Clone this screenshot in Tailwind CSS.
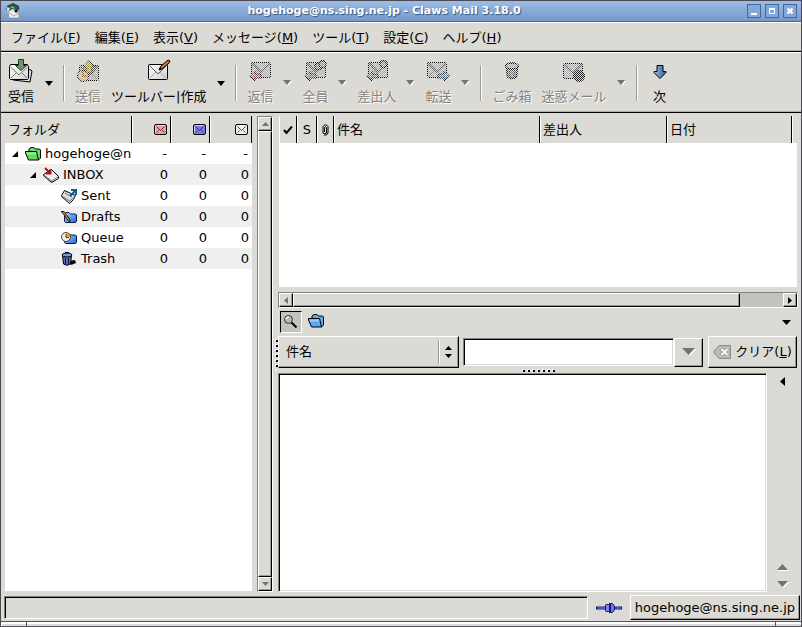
<!DOCTYPE html>
<html lang="ja">
<head>
    <meta charset="UTF-8">
    <meta name="viewport" content="width=device-width, initial-scale=1.0">
    <title>hogehoge@ns.sing.ne.jp - Claws Mail 3.18.0</title>
    <script src="https://cdn.jsdelivr.net/npm/@tailwindcss/browser@4"></script>
</head>
<body class="h-screen overflow-hidden flex flex-col bg-[#dcdad5] text-black text-[13px] leading-5 font-['DejaVu_Sans','Noto_Sans_CJK_JP',sans-serif] border-x border-t border-[#4a4a50] cursor-default">

    <!-- Shared icons -->
    <svg class="absolute w-0 h-0" aria-hidden="true">
        <defs>
            <pattern id="stipple" width="2" height="2" patternUnits="userSpaceOnUse">
                <path d="M0 0h1v1h-1zM1 1h1v1h-1z" fill="#dcdad5" shape-rendering="crispEdges"/>
            </pattern>
            <linearGradient id="blue" x1="0" y1="0" x2="1" y2="1">
                <stop offset="0" stop-color="#b4dcff"/><stop offset="1" stop-color="#1c62d8"/>
            </linearGradient>
            <linearGradient id="steel"><stop offset="0" stop-color="#9cc4ea"/><stop offset="1" stop-color="#2c5688"/></linearGradient>
            <linearGradient id="paper" x1="0" y1="0" x2="1" y2="1">
                <stop offset="0" stop-color="#fff"/><stop offset="1" stop-color="#d0d0d0"/>
            </linearGradient>
        </defs>
        <symbol id="envelope" viewBox="0 0 20 16">
            <rect x=".5" y=".5" width="19" height="15" rx="1" fill="url(#paper)" stroke="#000"/>
            <path d="M2 14l6-6M18 14l-6-6" stroke="#aaa" fill="none"/>
            <path d="M1.500 1.500L10 10l8.500-8.500" fill="none" stroke="#555"/>
        </symbol>
        <symbol id="dim-envelope" viewBox="0 0 20 16">
            <rect x=".5" y=".5" width="19" height="15" rx="1" fill="#b0b0b0" stroke="#000"/>
            <path d="M2 14l6-6M18 14l-6-6" stroke="#888" fill="none"/>
            <path d="M1.500 1.500L10 10l8.500-8.500" fill="none" stroke="#555" stroke-width="2"/>
        </symbol>
        <symbol id="mini-envelope" viewBox="0 0 13 11">
            <rect x=".5" y=".5" width="12" height="10" rx="1.500" fill="currentColor" stroke="#000"/>
            <path d="M2.500 2.500l4 4 4-4M2.500 8.500l2-2M10.500 8.500l-2-2" fill="none" stroke="#222" stroke-width=".8"/>
            <path d="M2 1.500h9M1.500 2v7" stroke="#fff" opacity=".6"/>
        </symbol>
        <symbol id="person" viewBox="0 0 10 10">
            <circle cx="5" cy="4.500" r="4" fill="#b88868" stroke="#000" stroke-width="1.500"/>
            <path d="M2 4q1-3 3-2.500t3 2" stroke="#6b3a12" fill="none"/>
        </symbol>
        <symbol id="reply-arrow" viewBox="0 0 13 12">
            <path d="M.8 6L6 1v3h6v4H6v3z" fill="#a86a6a" stroke="#000"/>
        </symbol>
        <symbol id="folder" viewBox="0 0 16 14">
            <path d="M4 4V2l2-1.500h3l1.500 1.500h4l1 1v8l-2 2z" fill="currentColor" stroke="#000"/>
            <path d="M.5 4.500h11l2 8.500h-10L.5 6z" fill="currentColor" stroke="#000"/>
            <path d="M1.500 5.500h9.500l.5 2H2z" fill="#fff" opacity=".4"/>
        </symbol>
        <symbol id="closed-folder" viewBox="0 0 13 11">
            <path d="M.5 9.500V2L2 .5h3L6.500 2h5l1 1v6.500l-1 1h-10z" fill="url(#blue)" stroke="#00184a"/>
        </symbol>
    </svg>

    <header class="h-[21px] shrink-0 flex items-center border-b border-[#46689a] bg-linear-to-b from-[#9dbce8] to-[#7599c9] px-1">
        <svg class="w-4 h-4" viewBox="0 0 16 16" aria-hidden="true">
            <path d="M1 6q1-4 4-4 3-3 6 0 3 0 3 4l-2 1-3-2-5 4z" fill="#2e5a3c" stroke="#14281e" stroke-width=".7"/>
            <path d="M1 4l4 1-2 5z" fill="#cbdde8"/>
            <path d="M6 4l3 1M8 7l2 1" stroke="#7ed03c" stroke-width="1.500"/>
            <path d="M3 9l4-3 7 4v5H4z" fill="#eee" stroke="#888" stroke-width=".7"/>
            <path d="M4 10l5 3 5-3" fill="none" stroke="#aaa"/>
            <circle cx="11" cy="8" r="1.500" fill="#111"/>
        </svg>
        <h1 class="flex-1 text-center text-[11px] font-bold text-white [text-shadow:1px_1px_1px_#34557f]">hogehoge@ns.sing.ne.jp - Claws Mail 3.18.0</h1>
        <div class="flex gap-1">
            <button aria-label="最小化" class="w-[14px] h-[14px] border border-[#41699d] bg-[#83a7d8] flex items-center justify-center">
                <svg class="w-3 h-3 shrink-0" viewBox="0 0 12 12"><path d="M3 8h6v2H3z" fill="#fff"/></svg>
            </button>
            <button aria-label="最大化" class="w-[14px] h-[14px] border border-[#41699d] bg-[#83a7d8] flex items-center justify-center">
                <svg class="w-3 h-3 shrink-0" viewBox="0 0 12 12"><path d="M3 3h6v6H3zM4 5v3h4V5z" fill="#fff" fill-rule="evenodd"/></svg>
            </button>
            <button aria-label="閉じる" class="w-[14px] h-[14px] border border-[#41699d] bg-[#83a7d8] flex items-center justify-center">
                <svg class="w-3 h-3 shrink-0" viewBox="0 0 12 12"><path d="M3.500 3.500l5 5m0-5l-5 5" stroke="#fff" stroke-width="2.400"/></svg>
            </button>
        </div>
    </header>

    <nav class="h-[30px] shrink-0 flex items-center pt-px pl-[3px] border-t border-t-white border-b border-b-black shadow-[inset_0_-1px_0_#aeaca6]">
        <button class="px-[7px]">ファイル(<u>F</u>)</button>
        <button class="px-[7px]">編集(<u>E</u>)</button>
        <button class="px-[7px]">表示(<u>V</u>)</button>
        <button class="px-[7px]">メッセージ(<u>M</u>)</button>
        <button class="px-[7px]">ツール(<u>T</u>)</button>
        <button class="px-[7px]">設定(<u>C</u>)</button>
        <button class="px-[7px]">ヘルプ(<u>H</u>)</button>
    </nav>

    <div role="toolbar" class="h-[61px] shrink-0 flex items-center pt-px pl-[2px] border-t border-t-white border-b border-b-black shadow-[inset_0_-1px_0_#aeaca6] whitespace-nowrap">
        <button class="px-[5px] flex flex-col items-center gap-1">
            <svg class="w-6 h-6" viewBox="0 0 24 24">
                <path d="M5 9l17 2 1 1-2 11-17-2z" fill="#ddd" stroke="#000"/>
                <path d="M.5 7.500l1-2h17l1 2v12l-1 1h-17l-1-1z" fill="url(#paper)" stroke="#000"/>
                <path d="M1.500 8l8.500 8 8.500-8M2 19l5-5m11 5l-5-5" fill="none" stroke="#777"/>
                <path d="M9.500.5h5v6h3L12 11.500 6.500 6.500h3z" fill="#6a9a6c" stroke="#1b3a1d"/>
            </svg>
            <span>受信</span>
        </button>
        <button aria-label="受信メニュー" class="w-[19px] flex justify-center"><svg class="w-2 h-[5px]" viewBox="0 0 8 5"><path d="M0 0h8L4 5z"/></svg></button>
        <div class="w-3 h-9 flex justify-center"><div class="w-[2px] bg-[#9c9a94] border-r border-white"></div></div>
        <button disabled class="px-[5px] flex flex-col items-center gap-1 text-[#858380] [text-shadow:1px_1px_0_#fff]">
            <svg class="w-6 h-6" viewBox="0 0 24 24">
                <use href="#dim-envelope" x="3" y="6" width="20" height="16"/>
                <path d="M7 8l6-6.500L19 8h-3v6h-6V8z" fill="#a09850" stroke="#000"/>
                <circle cx="7" cy="17" r="5.500" fill="#c0b8a0" stroke="#000"/><path d="M7 12v5h4" stroke="#945a18" fill="none" stroke-width="2"/>
                <path d="M0 0h24v24H0z" fill="url(#stipple)"/>
            </svg>
            <span>送信</span>
        </button>
        <button class="px-[5px] flex flex-col items-center gap-1">
            <svg class="w-6 h-6" viewBox="0 0 24 24">
                <use href="#envelope" x="1" y="5" width="20" height="16"/>
                <path d="M12 11l2-4 7-6 2 1-1 2-7 6z" fill="#c8783c" stroke="#000"/><path d="M12 11l1-3 1.500 2z"/>
            </svg>
            <span>ツールバー|作成</span>
        </button>
        <button aria-label="作成メニュー" class="w-[19px] flex justify-center"><svg class="w-2 h-[5px]" viewBox="0 0 8 5"><path d="M0 0h8L4 5z"/></svg></button>
        <div class="w-3 h-9 flex justify-center"><div class="w-[2px] bg-[#9c9a94] border-r border-white"></div></div>
        <button disabled class="px-[5px] flex flex-col items-center gap-1 text-[#858380] [text-shadow:1px_1px_0_#fff]">
            <svg class="w-6 h-6" viewBox="0 0 24 24">
                <use href="#dim-envelope" x="3" y="3" width="20" height="16"/>
                <use href="#reply-arrow" x="1" y="11" width="13" height="12"/>
                <path d="M0 0h24v24H0z" fill="url(#stipple)"/>
            </svg>
            <span>返信</span>
        </button>
        <button disabled aria-label="返信メニュー" class="w-[19px] flex justify-center"><svg class="w-[9px] h-[6px]" viewBox="0 0 9 6"><path d="M1 1h8L5 6z" fill="#fff"/><path d="M0 0h8L4 5z" fill="#757370"/></svg></button>
        <button disabled class="px-[5px] flex flex-col items-center gap-1 text-[#858380] [text-shadow:1px_1px_0_#fff]">
            <svg class="w-6 h-6" viewBox="0 0 24 24">
                <use href="#dim-envelope" x="3" y="3" width="20" height="16"/>
                <use href="#person" x="11" y="3" width="9" height="9"/><use href="#person" x="15" y="1" width="9" height="9"/>
                <use href="#reply-arrow" x="1" y="11" width="13" height="12"/>
                <path d="M0 0h24v24H0z" fill="url(#stipple)"/>
            </svg>
            <span>全員</span>
        </button>
        <button disabled aria-label="全員メニュー" class="w-[19px] flex justify-center"><svg class="w-[9px] h-[6px]" viewBox="0 0 9 6"><path d="M1 1h8L5 6z" fill="#fff"/><path d="M0 0h8L4 5z" fill="#757370"/></svg></button>
        <button disabled class="px-[5px] flex flex-col items-center gap-1 text-[#858380] [text-shadow:1px_1px_0_#fff]">
            <svg class="w-6 h-6" viewBox="0 0 24 24">
                <use href="#dim-envelope" x="3" y="3" width="20" height="16"/>
                <use href="#person" x="14" y="1" width="9" height="9"/>
                <use href="#reply-arrow" x="1" y="11" width="13" height="12"/>
                <path d="M0 0h24v24H0z" fill="url(#stipple)"/>
            </svg>
            <span>差出人</span>
        </button>
        <button disabled aria-label="差出人メニュー" class="w-[19px] flex justify-center"><svg class="w-[9px] h-[6px]" viewBox="0 0 9 6"><path d="M1 1h8L5 6z" fill="#fff"/><path d="M0 0h8L4 5z" fill="#757370"/></svg></button>
        <button disabled class="px-[5px] flex flex-col items-center gap-1 text-[#858380] [text-shadow:1px_1px_0_#fff]">
            <svg class="w-6 h-6" viewBox="0 0 24 24">
                <use href="#dim-envelope" x="1" y="3" width="20" height="16"/>
                <path d="M23.500 17L18 12v3h-6v4h6v3z" fill="#6080a8" stroke="#000"/>
                <path d="M0 0h24v24H0z" fill="url(#stipple)"/>
            </svg>
            <span>転送</span>
        </button>
        <button disabled aria-label="転送メニュー" class="w-[19px] flex justify-center"><svg class="w-[9px] h-[6px]" viewBox="0 0 9 6"><path d="M1 1h8L5 6z" fill="#fff"/><path d="M0 0h8L4 5z" fill="#757370"/></svg></button>
        <div class="w-3 h-9 flex justify-center"><div class="w-[2px] bg-[#9c9a94] border-r border-white"></div></div>
        <button disabled class="px-[5px] flex flex-col items-center gap-1 text-[#858380] [text-shadow:1px_1px_0_#fff]">
            <svg class="w-6 h-6" viewBox="0 0 24 24">
                <path d="M6.500 8l1 10q4.500 3 9 0l1-10z" fill="#888" stroke="#000" stroke-width="1.500"/>
                <path d="M10 10v9M14 10v9" stroke="#222"/>
                <ellipse cx="12" cy="7" rx="6.500" ry="3" fill="#aaa" stroke="#000" stroke-width="1.500"/><path d="M10 4h4" stroke="#000"/>
                <path d="M0 0h24v24H0z" fill="url(#stipple)"/>
            </svg>
            <span>ごみ箱</span>
        </button>
        <button disabled class="px-[5px] flex flex-col items-center gap-1 text-[#858380] [text-shadow:1px_1px_0_#fff]">
            <svg class="w-6 h-6" viewBox="0 0 24 24">
                <use href="#dim-envelope" x="1" y="4" width="20" height="16"/>
                <circle cx="17" cy="17" r="5.500" fill="#222" stroke="#000"/>
                <path d="M0 0h24v24H0z" fill="url(#stipple)"/>
            </svg>
            <span>迷惑メール</span>
        </button>
        <button disabled aria-label="迷惑メールメニュー" class="w-[19px] flex justify-center"><svg class="w-[9px] h-[6px]" viewBox="0 0 9 6"><path d="M1 1h8L5 6z" fill="#fff"/><path d="M0 0h8L4 5z" fill="#757370"/></svg></button>
        <div class="w-3 h-9 flex justify-center"><div class="w-[2px] bg-[#9c9a94] border-r border-white"></div></div>
        <button class="px-[5px] flex flex-col items-center gap-1">
            <svg class="w-6 h-6" viewBox="0 0 24 24"><path d="M9 6.500h6v6h3v1l-6 6-6-6v-1h3z" fill="url(#steel)" stroke="#000"/></svg>
            <span>次</span>
        </button>
    </div>

    <main class="flex-1 min-h-0 flex pt-[3px] pb-[3px] pl-1 pr-[3px]">
        <!-- Folder tree -->
        <section class="w-[247px] shrink-0 bg-white mb-px overflow-hidden">
            <table class="w-full table-fixed border-separate border-spacing-0">
                <thead>
                    <tr class="h-[27px] bg-[#dcdad5]">
                        <th class="w-[127px] p-0 pl-[3px] text-left font-normal border-r border-black">フォルダ</th>
                        <th class="w-[39px] p-0 pr-[3px] border-l border-l-white border-r border-r-black"><svg class="w-[13px] h-[11px] ml-auto text-[#f49a9a]" role="img" aria-label="新着"><use href="#mini-envelope"/></svg></th>
                        <th class="w-[39px] p-0 pr-[3px] border-l border-l-white border-r border-r-black"><svg class="w-[13px] h-[11px] ml-auto text-[#7a7ae0]" role="img" aria-label="未読"><use href="#mini-envelope"/></svg></th>
                        <th class="p-0 pr-[3px] border-l border-l-white border-r border-r-black"><svg class="w-[13px] h-[11px] ml-auto text-[#eee]" role="img" aria-label="合計"><use href="#mini-envelope"/></svg></th>
                    </tr>
                </thead>
                <tbody class="text-right">
                    <tr class="h-[21px]">
                        <td class="p-0 pl-[7px] overflow-hidden">
                            <div class="flex items-center gap-1 whitespace-nowrap">
                                <svg class="w-[6px] h-[6px] mr-[3px] shrink-0" viewBox="0 0 6 6"><path d="M6 0v6H0z"/></svg>
                                <svg class="w-4 h-[14px] shrink-0 text-[#62dc62]"><use href="#folder"/></svg>
                                <span class="flex-1 min-w-0 overflow-hidden text-left">hogehoge@ns.sing.ne.jp</span>
                            </div>
                        </td>
                        <td class="p-0 pr-1">-</td><td class="p-0 pr-1">-</td><td class="p-0 pr-1">-</td>
                    </tr>
                    <tr class="h-[21px] bg-[#efefef]">
                        <td class="p-0 pl-[25px]">
                            <div class="flex items-center gap-1">
                                <svg class="w-[6px] h-[6px] mr-[3px] shrink-0" viewBox="0 0 6 6"><path d="M6 0v6H0z"/></svg>
                                <svg class="w-4 h-4 shrink-0" viewBox="0 0 16 16">
                                    <path d="M.5 7.500l8-5 7 7v2l-7 4-8-7z" fill="#eee" stroke="#000"/>
                                    <path d="M1 8l7.500 6 7-4.500M8.500 14v1" fill="none" stroke="#777"/>
                                    <path d="M2 1l5 5M7.500 2v4.500H3" stroke="#b01018" stroke-width="2" fill="none"/>
                                </svg>
                                <span>INBOX</span>
                            </div>
                        </td>
                        <td class="p-0 pr-[3px]">0</td><td class="p-0 pr-[3px]">0</td><td class="p-0 pr-[3px]">0</td>
                    </tr>
                    <tr class="h-[21px]">
                        <td class="p-0 pl-14">
                            <div class="flex items-center gap-1">
                                <svg class="w-4 h-4 shrink-0" viewBox="0 0 16 16">
                                    <path d="M.5 7.500l3-5 11 5-2 4-4 4-8-7z" fill="#ddd" stroke="#000"/>
                                    <path d="M4 5l7 4M1 8l7.500 5 4-3" fill="none" stroke="#777"/>
                                    <path d="M9 8l5-5M10 2h5v5" stroke="#08608c" stroke-width="2" fill="none"/>
                                </svg>
                                <span>Sent</span>
                            </div>
                        </td>
                        <td class="p-0 pr-[3px]">0</td><td class="p-0 pr-[3px]">0</td><td class="p-0 pr-[3px]">0</td>
                    </tr>
                    <tr class="h-[21px] bg-[#efefef]">
                        <td class="p-0 pl-14">
                            <div class="flex items-center gap-1">
                                <svg class="w-4 h-4 shrink-0" viewBox="0 0 16 16">
                                    <use href="#closed-folder" x="3" y="3" width="13" height="11"/>
                                    <path d="M0 2.500h3l6 8v2l-2-1-5-7z" fill="#b98048" stroke="#000" stroke-width=".8"/>
                                </svg>
                                <span>Drafts</span>
                            </div>
                        </td>
                        <td class="p-0 pr-[3px]">0</td><td class="p-0 pr-[3px]">0</td><td class="p-0 pr-[3px]">0</td>
                    </tr>
                    <tr class="h-[21px]">
                        <td class="p-0 pl-14">
                            <div class="flex items-center gap-1">
                                <svg class="w-4 h-4 shrink-0" viewBox="0 0 16 16">
                                    <use href="#closed-folder" x="3" y="3" width="13" height="11"/>
                                    <circle cx="5" cy="7" r="4.500" fill="#eee" stroke="#444"/>
                                    <path d="M5 3v4h4a4 4 0 0 0-4-4" fill="#e8a020"/><path d="M5 4v3.500h3" stroke="#704000" fill="none"/>
                                </svg>
                                <span>Queue</span>
                            </div>
                        </td>
                        <td class="p-0 pr-[3px]">0</td><td class="p-0 pr-[3px]">0</td><td class="p-0 pr-[3px]">0</td>
                    </tr>
                    <tr class="h-[21px] bg-[#efefef]">
                        <td class="p-0 pl-14">
                            <div class="flex items-center gap-1">
                                <svg class="w-4 h-4 shrink-0" viewBox="0 0 16 16">
                                    <path d="M8 10l6-1 1 3-5 2z"/>
                                    <path d="M1.500 4l1 9q3.500 2.500 7 0l1-9z" fill="#5a6cb0" stroke="#000"/>
                                    <path d="M4.500 7v6M7.500 7v6" stroke="#10183c"/>
                                    <ellipse cx="6" cy="4" rx="5" ry="2" fill="#8494cc" stroke="#000"/><path d="M4 1.500h4" stroke="#000"/>
                                </svg>
                                <span>Trash</span>
                            </div>
                        </td>
                        <td class="p-0 pr-[3px]">0</td><td class="p-0 pr-[3px]">0</td><td class="p-0 pr-[3px]">0</td>
                    </tr>
                </tbody>
            </table>
        </section>

        <!-- Tree scrollbar -->
        <div class="w-4 shrink-0 ml-[5px] flex flex-col border border-l-[#84827c] border-t-[#84827c] border-r-white border-b-white bg-[#c4c2bd]">
            <button disabled aria-label="上へ" class="h-[14px] shrink-0 flex items-center justify-center bg-[#dcdad5] border border-t-white border-l-white border-r-black border-b-black shadow-[inset_-1px_-1px_0_#9c9a94]">
                <svg class="w-[7px] h-1" viewBox="0 0 7 4"><path d="M0 4h7L3.500 0z" fill="#757370"/></svg>
            </button>
            <div class="flex-1 bg-[#dcdad5] border border-t-white border-l-white border-r-black border-b-black shadow-[inset_-1px_-1px_0_#9c9a94]"></div>
            <button disabled aria-label="下へ" class="h-[14px] shrink-0 flex items-center justify-center bg-[#dcdad5] border border-t-white border-l-white border-r-black border-b-black shadow-[inset_-1px_-1px_0_#9c9a94]">
                <svg class="w-[7px] h-1" viewBox="0 0 7 4"><path d="M0 0h7L3.500 4z" fill="#757370"/></svg>
            </button>
        </div>

        <!-- Vertical pane grip -->
        <div class="w-[5px] shrink-0 flex items-center justify-end">
            <svg class="w-[3px] h-[31px]" viewBox="0 0 3 31" shape-rendering="crispEdges">
                <path d="M1 0v31" stroke="#fff" stroke-width="2" stroke-dasharray="2 3"/>
                <path d="M2 1v30" stroke="#000" stroke-width="2" stroke-dasharray="2 3"/>
            </svg>
        </div>

        <section class="flex-1 min-w-0 flex flex-col">
            <!-- Message list -->
            <div class="h-[171px] shrink-0 mx-px bg-white">
                <table class="w-full table-fixed border-separate border-spacing-0">
                    <thead>
                        <tr class="h-[27px] bg-[#dcdad5] text-left">
                            <th class="w-[18px] p-0 border-l border-l-white border-r border-r-black">
                                <svg class="w-[10px] h-[10px] mx-auto" viewBox="0 0 10 10" role="img" aria-label="マーク"><path d="M1 5l2.500 3L9 1.500" fill="none" stroke="#000" stroke-width="2"/></svg>
                            </th>
                            <th class="w-5 p-0 text-center font-normal border-l border-l-white border-r border-r-black">S</th>
                            <th class="w-[17px] p-0 border-l border-l-white border-r border-r-black">
                                <svg class="w-[7px] h-3 mx-auto" viewBox="0 0 7 12" role="img" aria-label="添付"><path d="M2.500 8V3.500q1-1.500 2 0V9q-1.500 1.500-3.500 0V2.500q2.500-3.500 5 0V9q-1 3-4 2" fill="none" stroke="#000"/></svg>
                            </th>
                            <th class="p-0 pl-[2px] font-normal border-l border-l-white border-r border-r-black">件名</th>
                            <th class="w-[127px] p-0 pl-[2px] font-normal border-l border-l-white border-r border-r-black">差出人</th>
                            <th class="w-[125px] p-0 pl-[2px] font-normal border-l border-l-white border-r border-r-black">日付</th>
                            <th class="w-[5px] p-0 border-l border-l-white"></th>
                        </tr>
                    </thead>
                </table>
            </div>

            <!-- List scrollbar -->
            <div class="h-4 shrink-0 mt-[5px] flex border border-l-[#84827c] border-t-[#84827c] border-r-white border-b-white bg-[#c4c2bd]">
                <button disabled aria-label="左へ" class="w-[14px] shrink-0 flex items-center justify-center bg-[#dcdad5] border border-t-white border-l-white border-r-black border-b-black shadow-[inset_-1px_-1px_0_#9c9a94]">
                    <svg class="w-1 h-[7px]" viewBox="0 0 4 7"><path d="M4 0v7L0 3.500z" fill="#757370"/></svg>
                </button>
                <div class="flex-1 pr-[43px] flex">
                    <div class="flex-1 bg-[#dcdad5] border border-t-white border-l-white border-r-black border-b-black shadow-[inset_-1px_-1px_0_#9c9a94]"></div>
                </div>
                <button aria-label="右へ" class="w-[14px] shrink-0 flex items-center justify-center bg-[#dcdad5] border border-t-white border-l-white border-r-black border-b-black shadow-[inset_-1px_-1px_0_#9c9a94]">
                    <svg class="w-1 h-[7px]" viewBox="0 0 4 7"><path d="M0 0v7l4-3.500z"/></svg>
                </button>
            </div>

            <div class="h-[22px] shrink-0 mt-[3px] ml-[2px] pr-[7px] flex items-center">
                <button aria-label="検索" class="w-[22px] h-[22px] flex items-center justify-center bg-[#c4c2bd] border border-t-black border-l-black border-r-white border-b-white">
                    <svg class="w-4 h-4" viewBox="0 0 16 16">
                        <path d="M8 8l5.500 5.500" stroke="#000" stroke-width="2"/>
                        <circle cx="5.500" cy="5.500" r="4" fill="#b8b8a4" stroke="#333"/><path d="M3 5q1-2 3-2" stroke="#fff" fill="none" stroke-width="1.500"/>
                    </svg>
                </button>
                <button aria-label="フォルダ" class="ml-[6px] mb-[3px]"><svg class="w-4 h-[14px] text-[#5aa8f4]"><use href="#folder"/></svg></button>
                <button aria-label="スレッド" class="ml-auto"><svg class="w-[9px] h-[5px]" viewBox="0 0 9 5"><path d="M0 0h9L4.500 5z"/></svg></button>
            </div>

            <!-- Quick search -->
            <div class="h-8 shrink-0 mt-[3px] pr-px flex items-center">
                <div class="w-[181px] h-8 shrink-0 relative border border-t-white border-l-white border-r-black border-b-black shadow-[inset_-1px_-1px_0_#9c9a94]">
                    <select aria-label="検索対象" class="appearance-none w-full h-full pl-[7px] bg-transparent outline-none">
                        <option>件名</option>
                    </select>
                    <div class="absolute right-[6px] inset-y-[2px] flex items-center gap-[5px] pointer-events-none">
                        <div class="w-[2px] h-6 bg-[#9c9a94] border-r border-white"></div>
                        <svg class="w-[7px] h-3" viewBox="0 0 7 12"><path d="M0 4h7L3.500 0zM0 8h7l-3.500 4z"/></svg>
                    </div>
                </div>
                <input type="text" aria-label="検索語" class="flex-1 min-w-0 h-7 ml-1 px-1 bg-white outline-none border border-t-[#84827c] border-l-[#84827c] border-r-white border-b-white shadow-[inset_1px_1px_0_#000,inset_-1px_-1px_0_#dcdad5]">
                <button disabled aria-label="履歴" class="w-[29px] h-[29px] shrink-0 flex items-center justify-center border border-t-white border-l-white border-r-black border-b-black shadow-[inset_-1px_-1px_0_#9c9a94]">
                    <svg class="w-[14px] h-2" viewBox="0 0 14 8"><path d="M1 1h13L8 8z" fill="#fff"/><path d="M0 0h13L6.500 7z" fill="#757370"/></svg>
                </button>
                <button class="w-[89px] h-8 shrink-0 ml-[5px] flex items-center justify-center gap-1 whitespace-nowrap border border-t-white border-l-white border-r-black border-b-black shadow-[inset_-1px_-1px_0_#9c9a94]">
                    <svg class="w-[18px] h-4" viewBox="0 0 18 16"><path d="M.5 8L6 1.500h11.500v13H6z" fill="#bcbab5" stroke="#8c8a86"/><path d="M8.500 5l6 6m0-6l-6 6" stroke="#777" stroke-width="3"/><path d="M8.500 5l6 6m0-6l-6 6" stroke="#fff" stroke-width="2"/></svg>
                    <span>クリア(<u>L</u>)</span>
                </button>
            </div>

            <div class="h-[5px] shrink-0 flex items-center justify-center">
                <svg class="w-[33px] h-[3px]" viewBox="0 0 33 3" shape-rendering="crispEdges">
                    <path d="M0 1h33" stroke="#fff" stroke-width="2" stroke-dasharray="2 3"/>
                    <path d="M1 2h32" stroke="#000" stroke-width="2" stroke-dasharray="2 3"/>
                </svg>
            </div>

            <!-- Message view -->
            <div class="flex-1 min-h-0 flex">
                <article class="flex-1 bg-white border border-t-[#84827c] border-l-[#84827c] border-r-white border-b-white shadow-[inset_1px_1px_0_#000,inset_-1px_-1px_0_#dcdad5]"></article>
                <div class="w-[31px] flex flex-col items-center py-1">
                    <button aria-label="添付一覧"><svg class="w-[5px] h-[9px]" viewBox="0 0 5 9"><path d="M5 0v9L0 4.500z"/></svg></button>
                    <button disabled aria-label="前の添付" class="mt-auto"><svg class="w-3 h-[7px]" viewBox="0 0 12 7"><path d="M1 7h11L6.500 1z" fill="#fff"/><path d="M0 6h11L5.500 0z" fill="#757370"/></svg></button>
                    <button disabled aria-label="次の添付" class="mt-[10px]"><svg class="w-3 h-[7px]" viewBox="0 0 12 7"><path d="M1 1h11L6.500 7z" fill="#fff"/><path d="M0 0h11L5.500 6z" fill="#757370"/></svg></button>
                </div>
            </div>
        </section>
    </main>

    <footer class="h-[25px] shrink-0 flex items-center pl-[3px] pr-px mb-px">
        <div class="flex-1 h-[23px] border border-t-[#84827c] border-l-[#84827c] border-r-white border-b-white shadow-[inset_1px_1px_0_#000]"></div>
        <button aria-label="オンライン" class="mx-2">
            <svg class="w-[26px] h-3" viewBox="0 0 26 12">
                <path d="M0 6h26" stroke="#10107c" stroke-width="3"/><path d="M1 6h24" stroke="#8c94f0"/>
                <rect x="9.500" y="2.500" width="4" height="7" rx="1" fill="#8088f0" stroke="#10107c"/>
                <path d="M13.500 1v10M14.500 1.500h2l2 3v3l-2 3h-2z" fill="#7078e8" stroke="#10107c"/>
            </svg>
        </button>
        <button class="h-[25px] px-1 whitespace-nowrap border border-t-white border-l-white border-r-black border-b-black shadow-[inset_-1px_-1px_0_#9c9a94]">hogehoge@ns.sing.ne.jp</button>
    </footer>

    <!-- Window resize handles -->
    <div class="h-[6px] shrink-0 flex gap-px bg-[#55555c] py-px">
        <div class="w-[25px] bg-[#dcdad5] border-t-2 border-l border-white"></div>
        <div class="flex-1 bg-[#dcdad5] border-t-2 border-white"></div>
        <div class="w-[25px] bg-[#dcdad5] border-t-2 border-white"></div>
    </div>
</body>
</html>
